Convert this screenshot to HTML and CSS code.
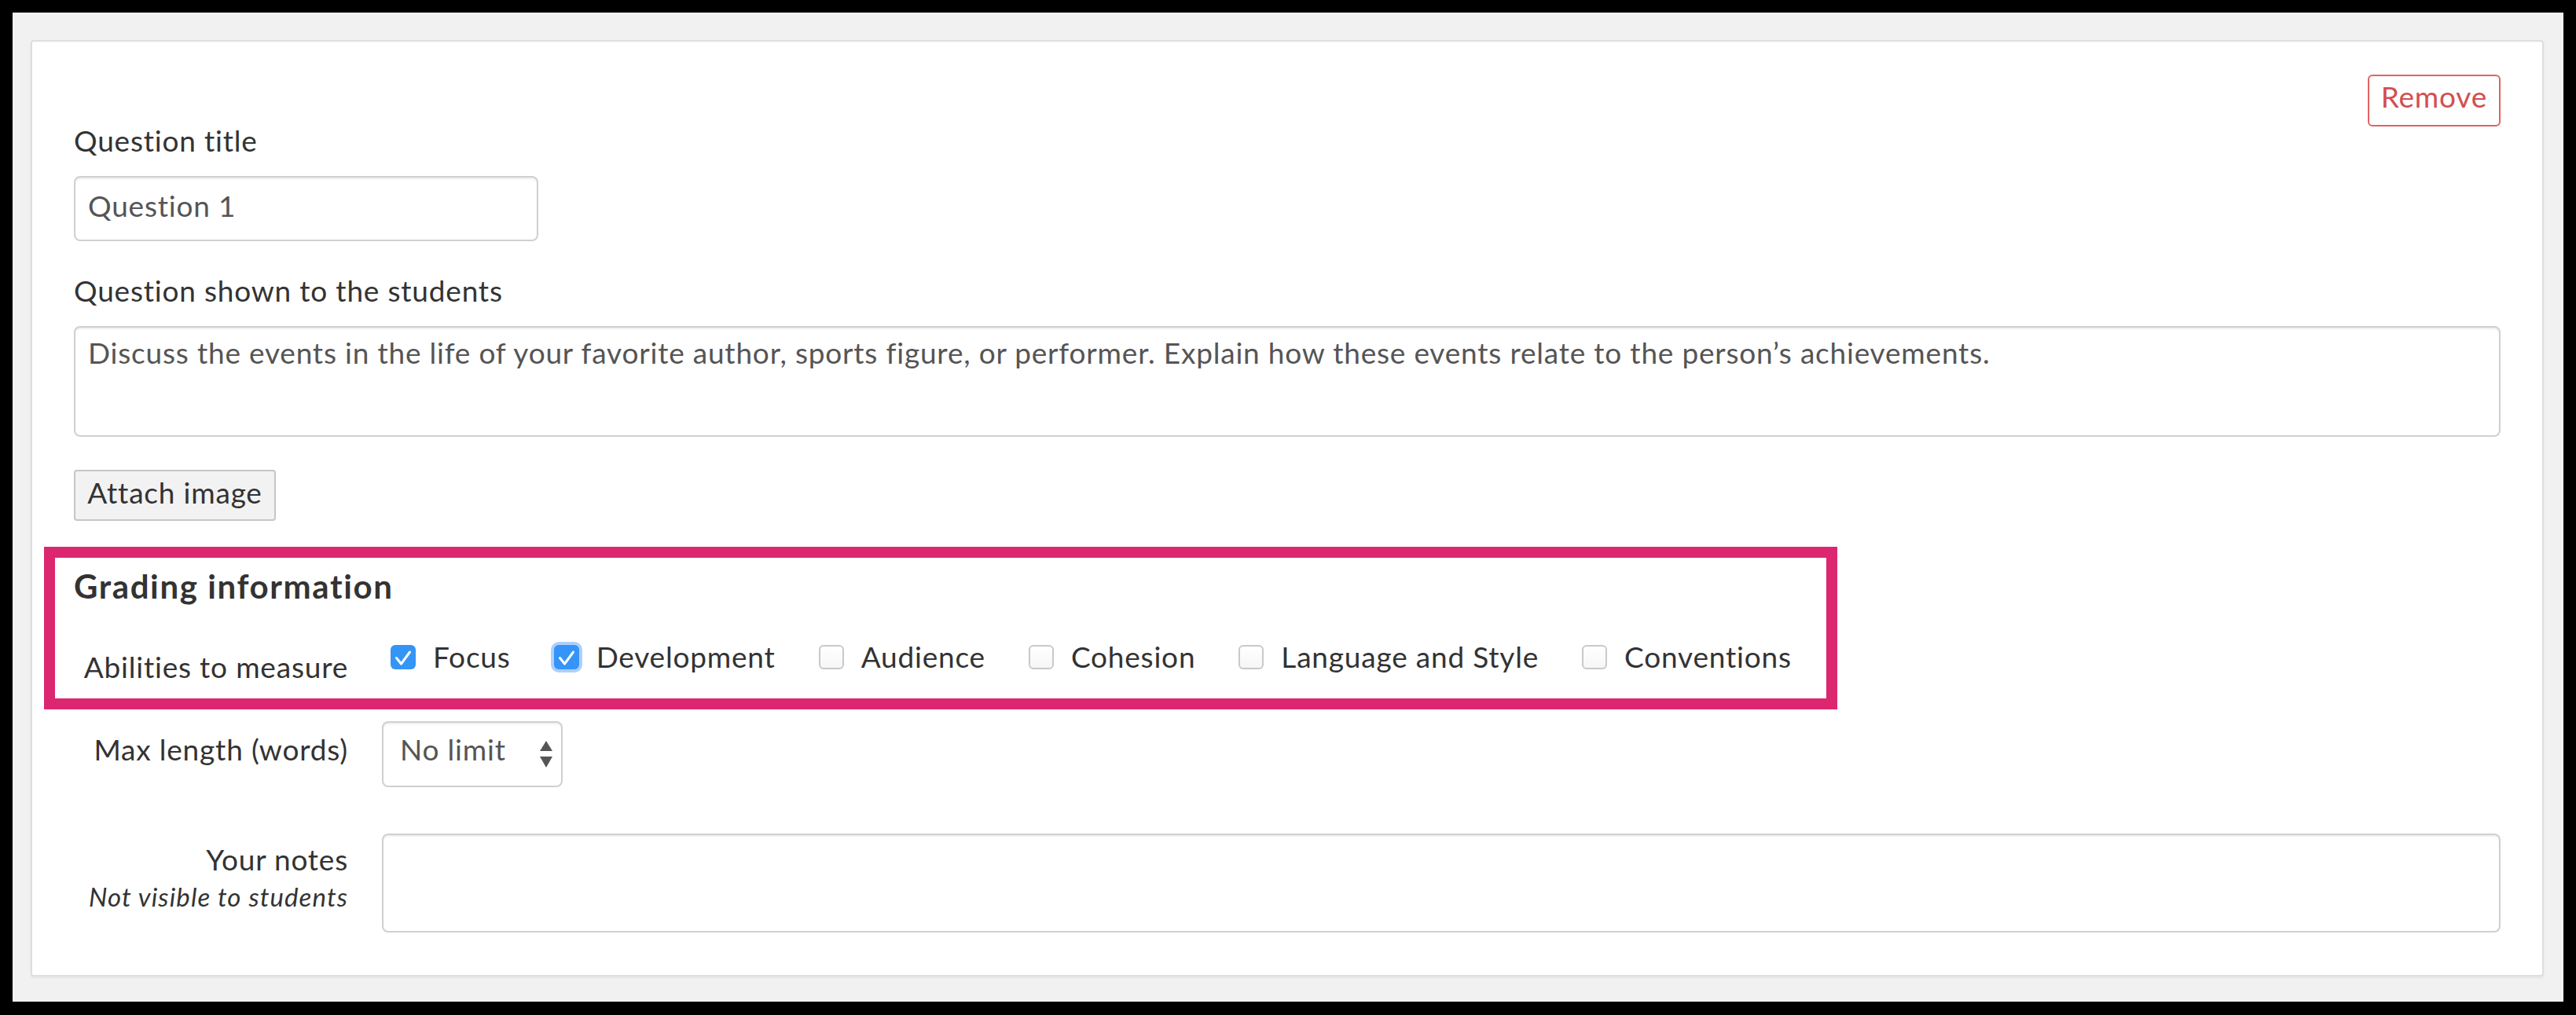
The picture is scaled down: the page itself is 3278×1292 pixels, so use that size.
FILE: index.html
```html
<!DOCTYPE html>
<html>
<head>
<meta charset="utf-8">
<title>Question editor</title>
<link rel="stylesheet" href="styles.css">
</head>
<body>
<div class="frame">
  <div class="card">
    <div class="card-top"><button class="btn btn-remove">Remove</button></div>

    <label class="lbl">Question title</label>
    <div class="field title-input">Question 1</div>

    <label class="lbl lbl-gap">Question shown to the students</label>
    <div class="field question-text">Discuss the events in the life of your favorite author, sports figure, or performer. Explain how these events relate to the person’s achievements.</div>

    <button class="btn btn-attach">Attach image</button>

    <section class="grading">
      <h2 class="grading-title">Grading information</h2>
      <div class="row abilities">
        <div class="row-label">Abilities to measure</div>
        <div class="checks">
          <div class="check"><span class="cb on"><svg viewBox="0 0 32 31" class="tick"><path d="M7.5 16.5 L13.5 24 L24.5 9"/></svg></span><span>Focus</span></div>
          <div class="check"><span class="cb on focus"><svg viewBox="0 0 32 31" class="tick"><path d="M7.5 16.5 L13.5 24 L24.5 9"/></svg></span><span>Development</span></div>
          <div class="check"><span class="cb off"></span><span>Audience</span></div>
          <div class="check"><span class="cb off"></span><span>Cohesion</span></div>
          <div class="check"><span class="cb off"></span><span>Language and Style</span></div>
          <div class="check"><span class="cb off"></span><span>Conventions</span></div>
        </div>
      </div>
    </section>

    <div class="row maxlen">
      <div class="row-label">Max length (words)</div>
      <div class="field select"><span>No limit</span><svg class="arrows" viewBox="0 0 18 34"><polygon points="9,0 17,13 1,13"/><polygon points="1,20 17,20 9,34"/></svg></div>
    </div>

    <div class="row notes">
      <div class="row-label">
        <div>Your notes</div>
        <div class="hint">Not visible to students</div>
      </div>
      <div class="field notes-area"></div>
    </div>
  </div>
</div>
</body>
</html>
```

FILE: styles.css
```css
html, body {
  margin: 0;
}
body {
  background: #000;
  padding: 16px 16px 17px;
  font-family: Lato, "Liberation Sans", sans-serif;
  font-size: 37px;
  line-height: 44px;
  letter-spacing: 0.8px;
  font-variant-ligatures: none;
  color: #333;
}
.frame {
  background: #f1f1f1;
  padding: 35px 25px 32px 23px;
}
.card {
  background: #fff;
  border: 2px solid #dedede;
  border-radius: 4px;
  box-shadow: 0 2px 3px rgba(0, 0, 0, 0.06);
  padding: 42px 53px 54px 53px;
}
.card-top {
  display: flex;
  justify-content: flex-end;
  align-items: flex-start;
  height: 62px;
}
.btn {
  display: block;
  font-family: inherit;
  font-size: 37px;
  line-height: 44px;
  letter-spacing: 0.8px;
  font-variant-ligatures: none;
  box-sizing: border-box;
  margin: 0;
}
.btn-remove {
  height: 66px;
  padding: 4px 15px 14px;
  color: #d24f4f;
  background: #fff;
  border: 2px solid #e06363;
  border-radius: 6px;
}
.lbl {
  display: block;
  margin-bottom: 23px;
}
.lbl-gap {
  margin-top: 41px;
}
.field {
  box-sizing: border-box;
  border: 2px solid #d0d0d0;
  border-radius: 8px;
  box-shadow: inset 0 2px 2px rgba(0, 0, 0, 0.07);
  background: #fff;
  color: #555;
  padding: 14px 16px 21px;
}
.title-input {
  width: 591px;
  height: 83px;
}
.question-text {
  height: 141px;
  padding-top: 10px;
}
.btn-attach {
  margin-top: 42px;
  height: 65px;
  width: 257px;
  padding: 5px 0 12px;
  text-align: center;
  color: #333;
  background: #f2f2f2;
  border: 2px solid #c6c6c6;
  border-radius: 4px;
}
.grading {
  margin: 33px 0 0 -38px;
  width: 2282px;
  box-sizing: border-box;
  border: 14px solid #dd2670;
  padding: 12px 0 18px 24px;
}
.grading-title {
  margin: 0;
  font-size: 42px;
  line-height: 49px;
  font-weight: 700;
  letter-spacing: 1.6px;
  color: #333;
}
.row {
  display: flex;
  align-items: flex-start;
}
.row-label {
  flex: 0 0 349px;
  margin-right: 43px;
  text-align: right;
}
.abilities {
  margin-top: 43px;
}
.abilities .row-label {
  padding-top: 13px;
}
.checks {
  display: flex;
  gap: 55px;
  margin-left: 11px;
}
.check {
  display: flex;
  align-items: center;
  gap: 22px;
  white-space: nowrap;
}
.cb {
  display: block;
  width: 32px;
  height: 31px;
  box-sizing: border-box;
  border-radius: 6px;
}
.cb.on {
  background: #3494f8;
}
.cb.focus {
  box-shadow: 0 0 0 4px rgba(105, 170, 250, 0.55);
}
.cb.off {
  background: linear-gradient(#fff, #f6f6f6);
  border: 2px solid #c9c9c9;
}
.tick {
  display: block;
  width: 32px;
  height: 31px;
}
.tick path {
  fill: none;
  stroke: #fff;
  stroke-width: 3;
  stroke-linecap: round;
  stroke-linejoin: round;
}
.maxlen {
  margin-top: 15px;
}
.maxlen .row-label {
  padding-top: 14px;
}
.select {
  display: flex;
  justify-content: space-between;
  align-items: flex-start;
  width: 230px;
  height: 84px;
  padding: 12px 10px 24px 21px;
  color: #555;
}
.arrows {
  width: 18px;
  height: 34px;
  margin-top: 11px;
  fill: #555;
}
.notes {
  margin-top: 59px;
}
.notes .row-label {
  padding-top: 11px;
}
.hint {
  font-style: italic;
  font-size: 33px;
  line-height: 38px;
  letter-spacing: 1.1px;
  margin-top: 6px;
}
.notes-area {
  flex: 1;
  height: 126px;
}
```
